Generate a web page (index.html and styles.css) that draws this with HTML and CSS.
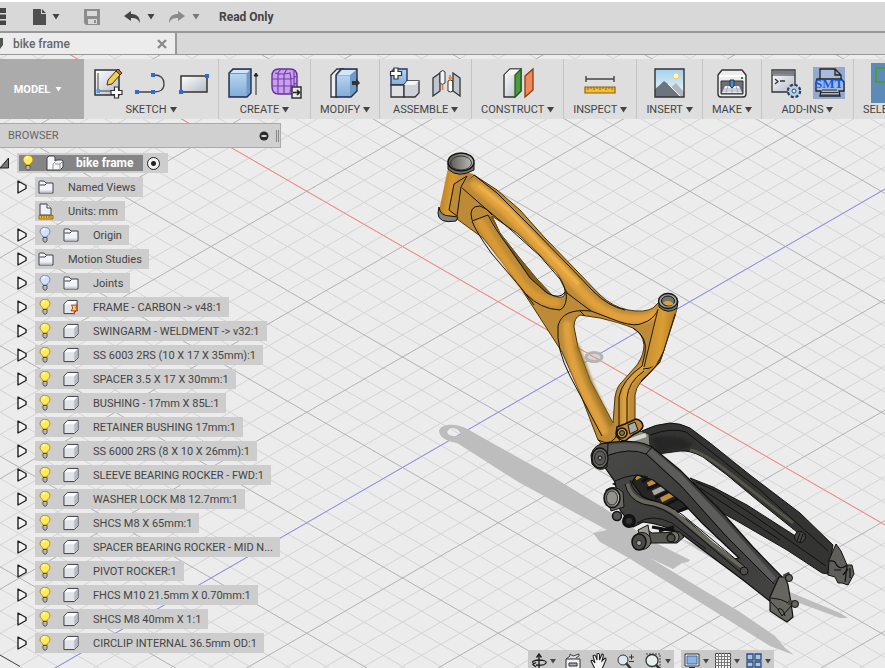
FILE: index.html
```html
<!DOCTYPE html>
<html lang="en">
<head>
    <meta charset="UTF-8">
    <meta name="viewport" content="width=device-width, initial-scale=1.0">
    <title>bike frame</title>
    <link rel="stylesheet" href="styles.css">
</head>
<body>
    <!-- shared icons -->
    <svg class="defs" width="0" height="0" aria-hidden="true">
        <defs>
            <linearGradient id="metal" x1="0" y1="0" x2="1" y2="1">
                <stop offset="0" stop-color="#fff"/><stop offset="1" stop-color="#b4b9c6"/>
            </linearGradient>
            <linearGradient id="blue" x1="0" y1="0" x2="0" y2="1">
                <stop offset="0" stop-color="#b8d4f0"/><stop offset="1" stop-color="#84add9"/>
            </linearGradient>
            <linearGradient id="sky" x1="0" y1="0" x2="0" y2="1">
                <stop offset="0" stop-color="#a5d0ee"/><stop offset="1" stop-color="#f3f9fb"/>
            </linearGradient>
            <symbol id="i-arrow" viewBox="0 0 10 14">
                <path d="M1 1V13L9 8.500V5.500Z" fill="#f4f4f4" stroke="#222" stroke-width="1.400" stroke-linejoin="round"/>
            </symbol>
            <symbol id="i-bulb" viewBox="0 0 12 16">
                <path d="M4 10C4 8 1 7.500 1 4.800A4.600 4.300 0 0 1 11 4.800C11 7.500 8 8 8 10Z" fill="#ffed5c" stroke="#b98a1d"/>
                <path d="M4 3.500Q4.500 2 6 2" fill="none" stroke="#fff" stroke-width="1.500"/>
                <path d="M4 10.500H8V13.500L7 15H5L4 13.500Z" fill="#bbb" stroke="#555"/>
            </symbol>
            <symbol id="i-bulb-off" viewBox="0 0 12 16">
                <path d="M4 10C4 8 1 7.500 1 4.800A4.600 4.300 0 0 1 11 4.800C11 7.500 8 8 8 10Z" fill="#d3e2fb" stroke="#7586b5"/>
                <path d="M4 3.500Q4.500 2 6 2" fill="none" stroke="#fff" stroke-width="1.500"/>
                <path d="M4 10.500H8V13.500L7 15H5L4 13.500Z" fill="#bbb" stroke="#555"/>
            </symbol>
            <symbol id="i-folder" viewBox="0 0 16 14">
                <path d="M1 13V2Q1 1 2 1H6L8 3H15V13Z" fill="#f2f3f6" stroke="#3c404a"/>
                <path d="M1.500 5H7L8.500 3.500" fill="none" stroke="#3c404a"/>
                <path d="M2 11.500H14" stroke="#d0d2da" stroke-width="2"/>
            </symbol>
            <symbol id="i-units" viewBox="0 0 16 17">
                <path d="M2 12V1H9L13 5V12Z" fill="#f0f1f4" stroke="#3c404a"/>
                <path d="M9 1V5H13" fill="#fff" stroke="#3c404a"/>
                <path d="M1 12.500H15V16H1Z" fill="#f7bd31" stroke="#a06a12"/>
                <path d="M3.500 13V15M6 13V15M8.500 13V15M11 13V15M13 13V15" stroke="#a06a12"/>
            </symbol>
            <symbol id="i-cube" viewBox="0 0 17 16">
                <path d="M1 15V5L5 1H16V11L12 15Z" fill="#e2e3e8" stroke="#33363f"/>
                <path d="M1.700 5L5.200 1.500H15.500L12 5Z" fill="#fff"/>
                <path d="M12 5.200L15.500 1.700V10.800L12 14.300Z" fill="#b9bcc8"/>
            </symbol>
            <symbol id="i-pinned" viewBox="0 0 17 17">
                <path d="M1 15V5L5 1H15V11L11 15Z" fill="#e6e7eb" stroke="#33363f"/>
                <path d="M1.700 5L5.200 1.500H14.500L11 5Z" fill="#fff"/>
                <path d="M9 6H15L13.500 9L15.500 12H8.500L10.500 9Z" fill="#ffd36b" stroke="#a5380e"/>
                <path d="M12 12V16" stroke="#a5380e"/>
            </symbol>
            <symbol id="i-assembly" viewBox="0 0 18 16">
                <path d="M1 15V3L3 1H8L9 2V6L11 5H16L17 6V12L14 15Z" fill="#f6f6f8" stroke="#3f424a"/>
                <path d="M7 9V15M9 7L7 9M14 9V15M9 9H14L17 6" fill="none" stroke="#8b8f9a"/>
            </symbol>
            <symbol id="i-down" viewBox="0 0 7 6"><path d="M0 0H7L3.500 5.500Z" fill="currentColor"/></symbol>
        </defs>
    </svg>

    <header class="top-bar">
        <button class="icon-btn grid-btn" aria-label="Data panel"><svg width="6" height="18" viewBox="0 0 6 18"><path d="M0 0H6V5H0ZM0 6.500H6V11H0ZM0 12.500H6V17H0Z" fill="#444"/></svg></button>
        <button class="icon-btn file-btn" aria-label="File">
            <svg width="13" height="16" viewBox="0 0 13 16"><path d="M0 0H8V5H13V16H0Z M9 0L13 4H9Z" fill="#4f4f4f"/></svg>
            <svg class="caret" width="8" height="6"><use href="#i-down"/></svg>
        </button>
        <button class="icon-btn save-btn" aria-label="Save"><svg width="16" height="16" viewBox="0 0 16 16"><path d="M0 0H16V16H2L0 14Z" fill="#8d8d8d"/><path d="M3 2H13V7H3ZM4 10H13V15H4Z" fill="#d8d8d8"/><path d="M10 11H12V14H10Z" fill="#8d8d8d"/></svg></button>
        <button class="icon-btn undo-btn" aria-label="Undo">
            <svg width="17" height="12" viewBox="0 0 17 12"><path d="M0 5L7 0V3C12 3 16 5 16 12C14 8 12 7 7 7V10Z" fill="#444"/></svg>
            <svg class="caret" width="8" height="6"><use href="#i-down"/></svg>
        </button>
        <button class="icon-btn redo-btn" aria-label="Redo" disabled>
            <svg width="17" height="12" viewBox="0 0 17 12"><path d="M16 5L9 0V3C4 3 0 5 0 12C2 8 4 7 9 7V10Z" fill="#8a8a8a"/></svg>
            <svg class="caret" width="8" height="6"><use href="#i-down"/></svg>
        </button>
        <span class="read-only">Read Only</span>
    </header>

    <nav class="tabs">
        <div class="tab">
            <svg width="4" height="13" viewBox="0 0 4 13"><path d="M0 1H3V8L0 12Z" fill="#555"/></svg>
            <a href="#" class="tab-name">bike frame</a>
            <button class="icon-btn" aria-label="Close tab"><svg width="10" height="10" viewBox="0 0 10 10"><path d="M1 1L9 9M9 1L1 9" stroke="#8a8a8a" stroke-width="2.400"/></svg></button>
        </div>
    </nav>

    <main class="viewport">
        <svg class="canvas" width="100%" height="100%" aria-hidden="true">
            <defs>
                <linearGradient id="headTube" x1="0" y1="0" x2="1" y2="0.200">
                    <stop offset="0" stop-color="#a87420"/><stop offset="0.400" stop-color="#d79a33"/><stop offset="1" stop-color="#b07f2c"/>
                </linearGradient>
                <linearGradient id="seatTube" x1="0" y1="0" x2="1" y2="0.200">
                    <stop offset="0" stop-color="#b98930"/><stop offset="0.600" stop-color="#dc9d35"/><stop offset="1" stop-color="#ab7a26"/>
                </linearGradient>
                <linearGradient id="pipe" x1="0" y1="0" x2="1" y2="0">
                    <stop offset="0" stop-color="#5e5d58"/><stop offset="1" stop-color="#b9b8b2"/>
                </linearGradient>
                <linearGradient id="arm" x1="0" y1="0" x2="1" y2="1">
                    <stop offset="0" stop-color="#4a4a49"/><stop offset="0.500" stop-color="#3a3a39"/><stop offset="1" stop-color="#444442"/>
                </linearGradient>
                <filter id="soft" x="-10%" y="-10%" width="120%" height="120%"><feGaussianBlur stdDeviation="1.500"/></filter>
            </defs>
            <g transform="translate(0 -55)">
                <path id="minor" stroke="#d4d4d4" fill="none"/>
                <path id="major" stroke="#b2b2b2" fill="none"/>
                <path d="M0 14.200L594 357L3594 2088" stroke="#f88" fill="none"/>
                <path d="M0 699.800L594 357L1794 -335.500" stroke="#9090f4" fill="none"/>
                <path d="M0 655L20 666.500" stroke="#444"/>

                <!-- floor shadow -->
                <g fill="#bdbdbd">
                    <path fill-rule="evenodd" d="M439 431C440 424 456 422 469 430L553 477L607 510L650 540L690 560L688 562L682 563L673 569L650 558L740 612L775 636L785 648L794 655L770 646L714 611L627 557L600 542L593 533L607 530L520 483L457 443Q440 440 439 431ZM447 432Q449 438 461 435Q459 427 450 428Z"/>
                    <path d="M680 538L720 556L790 592L840 613L848 618L840 618L780 596L735 573Z"/>
                </g>

                <ellipse cx="594" cy="357" rx="8" ry="4.500" fill="#d6d6d6" stroke="#b4b4b4" stroke-width="3"/>
                <path d="M590 355L598 359" stroke="#e77"/>

                <!-- far side of the swingarm -->
                <path fill-rule="evenodd" fill="#343433" stroke="#111" d="M642 431Q655 424 670 423Q680 423 690 428L710 443L750 475L800 513L833 545L828 574L822 573L787 550L737 521L715 509L690 478L713 487L747 505L797 537L797 532L757 500L727 475L703 457Q690 450 680 451L650 455Z"/>
                <path d="M650 435Q672 427 686 432L718 457L760 490L828 551" fill="none" stroke="#111"/>
                <path d="M690 450Q703 452 732 475L793 523" fill="none" stroke="#56544b" stroke-width="3"/>
                <path d="M696 482L716 491L750 513L790 541L826 566M700 488L740 514L780 540" fill="none" stroke="#111"/>
                <path d="M650 438Q676 432 693 444L685 450Q668 449 658 455Z" fill="#252525" filter="url(#soft)"/>
                <circle cx="800" cy="537" r="5.500" fill="#444" stroke="#111"/>
                <path d="M800 533L797 541M803 534L800 542" stroke="#111"/>
                <path d="M836 544L841 551L847 565L852 565L854 574L848 585L842 583L838 583L835 577L828 575L829 560Z" fill="#5f5e5a" stroke="#111"/>
                <path d="M829 561Q835 560 836 564Q840 571 847 565M834 570H841M843 575L848 569M847 566L845 582M850 568V578" fill="none" stroke="#111" stroke-width="1.200"/>

                <!-- frame -->
                <path fill-rule="evenodd" fill="#bd8b37" stroke="#4a3209" d="M474 175L497 190L520 210L545 238L577 271L600 295Q613 307 628 310Q645 313 653 308L658 303L677 308L675 316L664 350L660 362L640 383Q636 388 635 395V424L620 440L612 446H604L598 440L580 393L562 352L535 310L520 287L503 263L483 238L457 219L450 216L461 187Z
                    M492 216L517 233L540 255L557 273Q568 289 564 296Q560 299 552 295L537 279L518 256L500 233Z
                    M600 318L580 315Q574 318 574 327L578 347L590 380L613 423L615 397Q617 386 622 382L637 365Q644 355 644 345Q643 334 633 328Q621 323 600 318Z"/>
                <g fill="none" stroke-linecap="round" filter="url(#soft)">
                    <path d="M475 185L504 210L530 237L560 269L584 294Q602 313 622 318Q645 322 655 314" stroke="#e1a03a" stroke-width="9"/>
                    <path d="M480 186L508 209L540 243L578 283" stroke="#f2b64b" stroke-width="4"/>
                    <path d="M480 222L500 253L524 286Q540 302 556 303" stroke="#d99a35" stroke-width="8"/>
                    <path d="M567 325Q567 355 585 393L604 431" stroke="#e0a03c" stroke-width="8"/>
                    <path d="M655 355L637 374Q626 383 625 396V425" stroke="#dda03d" stroke-width="7"/>
                </g>
                <path d="M490 217L492 216L500 233L518 256L537 279L552 295L545 292L529 277L511 252Z" fill="#7d5b1d"/>
                <path d="M577 345L592 385L612 426" stroke="#96701f" stroke-width="3" fill="none" filter="url(#soft)"/>
                <g fill="none" stroke="#17120a">
                    <path d="M474 175L497 193L530 226L569 266L594 292Q608 306 625 310"/>
                    <path d="M461 187L485 208L510 229L540 256L560 279L567 293L591 311"/>
                    <path d="M457 219L450 212M454 184L466 176"/>
                    <path d="M472 220Q468 206 480 206Q487 208 492 215"/>
                    <path d="M472 221L488 215M472 221Q476 232 492 254L522 289L534 305"/>
                    <path d="M488 215Q494 228 513 253L530 278L547 293Q560 300 565 292"/>
                    <path d="M526 294Q540 309 560 310Q568 306 566 291"/>
                    <path d="M591 311Q562 308 558 326Q556 349 570 376L602 436"/>
                    <path d="M591 311L620 322Q636 327 643 323Q653 320 658 310"/>
                    <path d="M580 311L585 316M633 328Q648 337 645 353L642 366"/>
                    <path d="M643 369Q656 370 664 350"/>
                    <path d="M642 366Q622 380 619 397V430M644 371Q628 382 627 398V427M660 362L641 382"/>
                    <path d="M598 440Q613 448 618 432"/>
                </g>

                <!-- head tube and seat clamp -->
                <path d="M448 168L439 211Q443 220 457 219L461 190L474 174Z" fill="url(#headTube)"/>
                <path d="M454 184L467 176L461 187L457 216L449 210Z" fill="#bd8b37" stroke="#17120a"/>
                <path d="M439 207Q440 216 450 216L458 217L456 221Q438 224 438 213Z" fill="#858580" stroke="#111"/>
                <path d="M448 163V169Q458 179 474 170V163Z" fill="#74746f" stroke="#111"/>
                <ellipse cx="461" cy="162" rx="13" ry="9" fill="url(#pipe)" stroke="#151515" stroke-width="1.500"/>
                <ellipse cx="461" cy="163" rx="10.500" ry="7" fill="url(#pipe)" stroke="#222" stroke-width="0.800"/>
                <path d="M658 306L644 368L655 366L664 350L677 308Z" fill="url(#seatTube)"/>
                <path d="M658 309L644 367M675 314L664 350Q661 364 641 381" fill="none" stroke="#2b1d06"/>
                <path d="M659 301V307Q668 315 677 308L678 301Z" fill="#777771" stroke="#111"/>
                <ellipse cx="668" cy="301" rx="9.500" ry="7.500" fill="#a0a09a" stroke="#151515" stroke-width="1.300"/>
                <ellipse cx="668" cy="301" rx="6.500" ry="5" fill="#77746c" stroke="#111"/>
                <path d="M663 303Q668 298 674 304Q668 308 663 303Z" fill="#dea037"/>

                <!-- shock linkage -->
                <path d="M612 484L630 472L660 482L692 508L681 512L650 505Z" fill="#252524"/>
                <g stroke="#c18c3a" stroke-width="5">
                    <path d="M635 478L642 474"/><path d="M648 485L657 480"/><path d="M661 500L673 494"/>
                </g>
                <path d="M653 493L666 487" stroke="#aaa9a0" stroke-width="5"/>
                <path d="M642 482L650 476M647 489L661 483M655 498L671 490M664 506L681 497M675 513L688 507" stroke="#111" stroke-width="3"/>
                <path d="M625 440L640 431L649 434L650 446L620 444Z" fill="#85847c" stroke="#222"/>
                <path d="M628 441L646 435" stroke="#d7d7d2" stroke-width="4"/>
                <path d="M617 427L625 424L636 419Q642 420 643 426Q642 431 634 434L625 441Q617 440 616 434Z" fill="#c48a2d" stroke="#111" stroke-width="1.500"/>
                <circle cx="622" cy="433" r="5" fill="#cf9435" stroke="#111" stroke-width="1.500"/>
                <circle cx="622" cy="433" r="2.500" fill="#77776f" stroke="#111"/>
                <path d="M628 425L635 422L638 430L630 434Z" fill="#aaa9a3" stroke="#111"/>

                <!-- near side of the swingarm -->
                <path fill-rule="evenodd" fill="url(#arm)" stroke="#0d0d0d" stroke-width="1.200" d="M600 444Q620 440 637 442Q645 443 652 447L680 470L720 510L753 547L782 577L771 602L743 580L703 550L683 535Q663 524 643 522L633 527L620 510L615 482L604 466Z
                    M632 482L637 475L653 480L683 503L703 524L739 558L734 559L713 543L687 520L663 505L643 497Z"/>
                <path d="M652 449L680 473L724 519L776 578L772 583L724 533L680 484L646 452Z" fill="#5c5c5b"/>
                <path d="M605 446Q634 440 650 449L646 454Q626 448 608 455Z" fill="#5a5a58"/>
                <path d="M606 456Q630 447 646 454L682 487L725 535L774 584M652 447L646 454" fill="none" stroke="#0d0d0d"/>
                <path d="M615 481Q634 472 648 477" fill="none" stroke="#111"/>
                <path d="M627 484Q630 498 645 502Q666 504 681 518L712 544L745 569" fill="none" stroke="#68665d" stroke-width="4"/>
                <path d="M625 484Q628 499 643 504Q665 507 681 522L712 548L740 572M630 480Q633 494 648 499Q668 503 684 516L714 541L745 567" fill="none" stroke="#0d0d0d"/>
                <path d="M637 523Q652 513 672 523L706 549" fill="none" stroke="#111"/>
                <circle cx="744" cy="571" r="4" fill="#4f4e49" stroke="#111"/>

                <!-- pivots -->
                <path d="M591 455Q594 443 608 443L607 467Q599 473 592 464Z" fill="#565652" stroke="#111"/>
                <ellipse cx="600" cy="458" rx="8" ry="10" fill="#66655f" stroke="#111" stroke-width="1.300"/>
                <ellipse cx="600" cy="458" rx="5.500" ry="7" fill="#5a5954" stroke="#222"/>
                <circle cx="600" cy="458" r="2" fill="#999" stroke="#111"/>
                <path d="M606 490Q614 484 623 492L624 507L611 511Z" fill="#696862" stroke="#111"/>
                <ellipse cx="612" cy="498" rx="8" ry="9.500" fill="url(#pipe)" stroke="#111" stroke-width="1.500"/>
                <ellipse cx="612" cy="498" rx="5.500" ry="7" fill="#94938c" stroke="#333"/>
                <circle cx="617" cy="516" r="4.500" fill="#555" stroke="#111" stroke-width="1.500"/>
                <circle cx="629" cy="521" r="6" fill="#181818" stroke="#111" stroke-width="2"/>
                <circle cx="629" cy="521" r="3" fill="#333"/>
                <path d="M645 528L652 533L680 532L684 537L677 543H650Z" fill="#565651" stroke="#111"/>
                <path d="M652 527L675 531M659 531L674 527" stroke="#111" stroke-width="3"/>
                <path d="M638 530L648 525L651 543L644 548Z" fill="#9c9b94" stroke="#111"/>
                <ellipse cx="642" cy="541" rx="9" ry="8.500" fill="#696862" stroke="#111"/>
                <ellipse cx="639" cy="542" rx="7" ry="8" fill="#4b4a46" stroke="#111" stroke-width="1.500"/>
                <circle cx="639" cy="543" r="2.500" fill="#aaa99f" stroke="#222"/>
                <ellipse cx="674" cy="537" rx="5" ry="5.500" fill="#77766e" stroke="#111"/>
                <circle cx="671" cy="538" r="4" fill="#4e4d48" stroke="#111" stroke-width="1.300"/>

                <!-- dropout -->
                <path d="M779 577L785 577L788 585L791 603L793 617L787 622L779 617L770 611L770 597Z" fill="#66655f" stroke="#111" stroke-width="1.200"/>
                <path d="M771 598Q780 598 791 604M771 602Q778 608 782 616M778 609Q783 607 785 616M782 616L793 604" fill="none" stroke="#111"/>
                <path d="M784 577L790 574M788 602L797 604" stroke="#44433f" stroke-width="5"/>
                <circle cx="789" cy="578" r="3.500" fill="#66655f" stroke="#111"/>
                <circle cx="795" cy="604" r="3.500" fill="#66655f" stroke="#111"/>
            </g>
        </svg>

        <div class="ribbon">
            <button class="workspace">MODEL <svg class="caret" width="7" height="5"><use href="#i-down"/></svg></button>
            <div class="group">
                <div class="tools">
                    <button class="tool" aria-label="Create sketch"><svg width="32" height="32" viewBox="0 0 32 32"><path d="M3 3H27V28H3Z" fill="url(#metal)" stroke="#333" stroke-width="1.500"/><path d="M6 6V24H23" fill="none" stroke="#444"/><path d="M4.500 22H8V26H4.500Z" fill="#4b9df5"/><path d="M15 18L16 13L24 4L28 8L20 17Z" fill="#f7cf4b" stroke="#333"/><path d="M24 4L26 2L30 6L28 8Z" fill="#b96f42" stroke="#333"/><path d="M22.500 20H26.500V23.500H30V27.500H26.500V31H22.500V27.500H19V23.500H22.500Z" fill="#fff" stroke="#333" stroke-width="1.200"/></svg></button>
                    <button class="tool" aria-label="Arc"><svg width="32" height="32" viewBox="0 0 32 32"><path d="M3 25H19Q29 25 29 17Q29 8 19 8" fill="none" stroke="#444" stroke-width="1.300"/><path d="M0 23H4V27H0ZM16 23H20V27H16ZM16 6H20V10H16Z" fill="#2f6bd8"/></svg></button>
                    <button class="tool" aria-label="Rectangle"><svg width="32" height="32" viewBox="0 0 32 32"><path d="M3 9H29V25H3Z" fill="url(#metal)" stroke="#333" stroke-width="1.500"/><path d="M1 23H5V27H1ZM27 7H31V11H27Z" fill="#2f6bd8"/></svg></button>
                </div>
                <button class="menu">SKETCH <svg class="caret" width="7" height="6"><use href="#i-down"/></svg></button>
            </div>
            <div class="group">
                <div class="tools">
                    <button class="tool" aria-label="Extrude"><svg width="32" height="32" viewBox="0 0 32 32"><path d="M2 6L6 2H24V26L20 30H2Z" fill="#6f9ac8" stroke="#222f4f" stroke-width="1.400"/><path d="M3 7H19.500V29H3Z" fill="url(#blue)"/><path d="M3.500 6L6.500 3H23L20 6Z" fill="#d3e6f7"/><path d="M29 28V8M27 9H31L29 6Z" fill="#222" stroke="#222"/></svg></button>
                    <button class="tool" aria-label="Create form"><svg width="32" height="32" viewBox="0 0 32 32"><path d="M2 9Q2 2 9 2H20Q27 2 27 9V20Q27 27 20 27H9Q2 27 2 20Z" fill="#c9a0f0" stroke="#63309b" stroke-width="1.400"/><path d="M5 6Q12 8 20 6Q22 15 20 26M2 12H21L27 9M2 19H21L27 16M8 7V27M14 7V27M11 2L7 7M17 2L14 7M24 4V23" fill="none" stroke="#7440a6" stroke-width="1.200"/><path d="M22 20H31V31H22Z" fill="#e8e8e8" stroke="#333" stroke-width="1.500"/><path d="M23 25.500H29M27 23L29.500 25.500L27 28" fill="none" stroke="#222" stroke-width="1.700"/></svg></button>
                </div>
                <button class="menu">CREATE <svg class="caret" width="7" height="6"><use href="#i-down"/></svg></button>
            </div>
            <div class="group">
                <div class="tools">
                    <button class="tool" aria-label="Press pull"><svg width="32" height="32" viewBox="0 0 32 32"><path d="M2 8L8 2H14L8 8V30H2Z" fill="#eceef2" stroke="#333" stroke-width="1.300"/><path d="M7 8L12 2H28V24L22 30H7Z" fill="#6f9ac8" stroke="#222f4f" stroke-width="1.400"/><path d="M8 8.500H21V29H8Z" fill="url(#blue)"/><path d="M8.500 8L13 3H27L21 8Z" fill="#d3e6f7"/><path d="M23 14H27V11L31 16L27 20V18H23Z" fill="#333"/></svg></button>
                </div>
                <button class="menu">MODIFY <svg class="caret" width="7" height="6"><use href="#i-down"/></svg></button>
            </div>
            <div class="group">
                <div class="tools">
                    <button class="tool" aria-label="New component"><svg width="32" height="32" viewBox="0 0 32 32"><path d="M3 18V5L6 2H19V15L16 18Z" fill="url(#blue)" stroke="#22396b" stroke-width="1.400"/><path d="M3 18H16V30H3Z" fill="#dfe0e6" stroke="#333" stroke-width="1.300"/><path d="M16 18L19 14H31V26L27 30H16Z" fill="#cfd1da" stroke="#333" stroke-width="1.300"/><path d="M16 18H27L31 14H19Z" fill="#f5f5f7"/><path d="M6 1H10V4.500H13.500V8.500H10V12H6V8.500H2.500V4.500H6Z" fill="#fff" stroke="#333" stroke-width="1.200"/></svg></button>
                    <button class="tool" aria-label="Joint"><svg width="32" height="32" viewBox="0 0 32 32"><path d="M2 11L9 6V24L2 29Z" fill="#bfc6d0" stroke="#333" stroke-width="1.300"/><path d="M9 5Q12 2 14 5V16Q11 19 9 16Z" fill="#f4f4f4" stroke="#333"/><path d="M17 14Q19 12 22 14V24Q19 26 17 24Z" fill="#fff" stroke="#333"/><path d="M22 6L29 11V29L22 24Z" fill="#bfc6d0" stroke="#333" stroke-width="1.300"/><path d="M11.500 18V23M19 8V14M17.500 11H21" stroke="#f47a1f" stroke-width="1.600"/></svg></button>
                </div>
                <button class="menu">ASSEMBLE <svg class="caret" width="7" height="6"><use href="#i-down"/></svg></button>
            </div>
            <div class="group">
                <div class="tools">
                    <button class="tool" aria-label="Offset plane"><svg width="32" height="32" viewBox="0 0 32 32"><path d="M2 8L8 2H19V24L13 30H2Z" fill="url(#metal)" stroke="#333" stroke-width="1.400"/><path d="M2.500 8L8 2.500H18.500L13 8Z" fill="#f6f6f8"/><path d="M13 8L19 2V24L13 30Z" fill="#4c9a3f" stroke="#245c22" stroke-width="1.300"/><path d="M23 9L31 2V23L23 30Z" fill="#ee8b57" stroke="#8b3a16" stroke-width="1.300"/></svg></button>
                </div>
                <button class="menu">CONSTRUCT <svg class="caret" width="7" height="6"><use href="#i-down"/></svg></button>
            </div>
            <div class="group">
                <div class="tools">
                    <button class="tool" aria-label="Measure"><svg width="32" height="32" viewBox="0 0 32 32"><path d="M2 9V15M30 9V15M2 12H30" stroke="#444" stroke-width="1.400"/><path d="M1 20H31V26H1Z" fill="#f3bb36" stroke="#8a6412" stroke-width="1.200"/><path d="M4 20V23M7 20V22M10 20V23M13 20V22M16 20V23M19 20V22M22 20V23M25 20V22M28 20V23" stroke="#8a6412"/></svg></button>
                </div>
                <button class="menu">INSPECT <svg class="caret" width="7" height="6"><use href="#i-down"/></svg></button>
            </div>
            <div class="group">
                <div class="tools">
                    <button class="tool" aria-label="Decal"><svg width="32" height="32" viewBox="0 0 32 32"><path d="M1 2H30V30H1Z" fill="url(#sky)"/><circle cx="22" cy="9" r="3" fill="#fff6c5" stroke="#f2cf6a"/><path d="M15 22L22 16L30 25V30H15Z" fill="#aeb9bf"/><path d="M1 22Q6 18 10 14L14 17L27 30H1Z" fill="#6b757f"/><path d="M14 17L27 30" stroke="#fff"/><path d="M1 2H30V30H1Z" fill="none" stroke="#333" stroke-width="1.400"/></svg></button>
                </div>
                <button class="menu">INSERT <svg class="caret" width="7" height="6"><use href="#i-down"/></svg></button>
            </div>
            <div class="group">
                <div class="tools">
                    <button class="tool" aria-label="3D print"><svg width="32" height="32" viewBox="0 0 32 32"><path d="M2 8L6 3H26L30 8V27Q30 30 27 30H5Q2 30 2 27Z" fill="#ececee" stroke="#333" stroke-width="1.400"/><path d="M3 9H29" stroke="#fff" stroke-width="2"/><path d="M5 14H27V27H5Z" fill="#6b6f79" stroke="#333"/><path d="M9 19H23L26 26H6Z" fill="#eef0f4"/><path d="M8 22H24M7 24H25M12 19L10 26M16 19V26M20 19L22 26" stroke="#9a9ea8" stroke-width="0.800"/><path d="M14 13H18V19L16 21L14 19Z" fill="#4d8ad0" stroke="#234"/><path d="M25 10H27V12H25Z" fill="#178a1c"/></svg></button>
                </div>
                <button class="menu">MAKE <svg class="caret" width="7" height="6"><use href="#i-down"/></svg></button>
            </div>
            <div class="group">
                <div class="tools">
                    <button class="tool" aria-label="Scripts"><svg width="32" height="32" viewBox="0 0 32 32"><path d="M2 3H25V25H2Z" fill="url(#metal)" stroke="#333" stroke-width="1.300"/><path d="M3 4H24V7H3Z" fill="#777c86"/><path d="M2 8H25" stroke="#333"/><path d="M5 12L8 14.500L5 17M10 14H15" fill="none" stroke="#333" stroke-width="1.300"/><circle cx="24" cy="24" r="6" fill="#aac4e2" stroke="#28405f" stroke-width="2.500" stroke-dasharray="3 1.700"/><circle cx="24" cy="24" r="5" fill="#b8d0ea"/><circle cx="24" cy="24" r="2" fill="#fff" stroke="#28405f"/></svg></button>
                    <button class="tool" aria-label="SMT"><svg width="32" height="32" viewBox="0 0 32 32"><path d="M0 0H32V32H0Z" fill="#94a9cf"/><path d="M7 12V2H22L28 8V12M22 2V8H28" fill="#a9bbdc" stroke="#222" stroke-width="1.300"/><path d="M4 12H28L31 15V24H26L27 29H7L8 24H3V15Z" fill="#a5b9dc" stroke="#222" stroke-width="1.300"/><path d="M9 23H24M8 25.500H25M8 28H26" stroke="#333"/><text x="2" y="21" class="smt">SMT</text></svg></button>
                </div>
                <button class="menu">ADD-INS <svg class="caret" width="7" height="6"><use href="#i-down"/></svg></button>
            </div>
            <div class="group">
                <div class="tools">
                    <button class="tool select-tool" aria-label="Select"><svg width="32" height="40" viewBox="0 0 32 40"><path d="M0 0H32V40H0Z" fill="#5c8bb8"/><path d="M5 5H27V19H5Z" fill="none" stroke="#4f9d1b" stroke-width="1.500"/></svg></button>
                </div>
                <button class="menu">SELECT <svg class="caret" width="7" height="6"><use href="#i-down"/></svg></button>
            </div>
        </div>

        <section class="browser">
            <div class="browser-head">
                <span>BROWSER</span>
                <button class="icon-btn" aria-label="Collapse"><svg width="10" height="10" viewBox="0 0 10 10"><circle cx="5" cy="5" r="4.500" fill="#2b2b2b"/><path d="M2.500 5H7.500" stroke="#fff" stroke-width="1.600"/></svg></button>
                <i class="grip"></i>
            </div>
            <ul class="tree">
                <li class="root">
                    <svg width="9" height="12" viewBox="0 0 9 12"><path d="M0 11L8.500 1V11Z" fill="#777" stroke="#222"/></svg>
                    <div class="root-item">
                        <label class="root-name" for="active"><svg width="12" height="16"><use href="#i-bulb"/></svg><svg width="18" height="16"><use href="#i-assembly"/></svg><b>bike frame</b></label>
                        <input type="radio" id="active" name="active" checked>
                    </div>
                </li>
                <li><svg class="arrow"><use href="#i-arrow"/></svg><a href="#" class="item"><svg width="16" height="14"><use href="#i-folder"/></svg><span>Named Views</span></a></li>
                <li><i class="arrow"></i><a href="#" class="item"><svg width="16" height="17"><use href="#i-units"/></svg><span>Units: mm</span></a></li>
                <li><svg class="arrow"><use href="#i-arrow"/></svg><a href="#" class="item"><svg class="bulb"><use href="#i-bulb-off"/></svg><svg width="16" height="14"><use href="#i-folder"/></svg><span>Origin</span></a></li>
                <li><svg class="arrow"><use href="#i-arrow"/></svg><a href="#" class="item"><svg width="16" height="14"><use href="#i-folder"/></svg><span>Motion Studies</span></a></li>
                <li><svg class="arrow"><use href="#i-arrow"/></svg><a href="#" class="item"><svg class="bulb"><use href="#i-bulb-off"/></svg><svg width="16" height="14"><use href="#i-folder"/></svg><span>Joints</span></a></li>
                <li><svg class="arrow"><use href="#i-arrow"/></svg><a href="#" class="item"><svg class="bulb"><use href="#i-bulb"/></svg><svg width="16" height="17"><use href="#i-pinned"/></svg><span>FRAME - CARBON -&gt; v48:1</span></a></li>
                <li><svg class="arrow"><use href="#i-arrow"/></svg><a href="#" class="item"><svg class="bulb"><use href="#i-bulb"/></svg><svg width="16" height="16"><use href="#i-cube"/></svg><span>SWINGARM - WELDMENT -&gt; v32:1</span></a></li>
                <li><svg class="arrow"><use href="#i-arrow"/></svg><a href="#" class="item"><svg class="bulb"><use href="#i-bulb"/></svg><svg width="16" height="16"><use href="#i-cube"/></svg><span>SS 6003 2RS (10 X 17 X 35mm):1</span></a></li>
                <li><svg class="arrow"><use href="#i-arrow"/></svg><a href="#" class="item"><svg class="bulb"><use href="#i-bulb"/></svg><svg width="16" height="16"><use href="#i-cube"/></svg><span>SPACER 3.5 X 17 X 30mm:1</span></a></li>
                <li><svg class="arrow"><use href="#i-arrow"/></svg><a href="#" class="item"><svg class="bulb"><use href="#i-bulb"/></svg><svg width="16" height="16"><use href="#i-cube"/></svg><span>BUSHING - 17mm X 85L:1</span></a></li>
                <li><svg class="arrow"><use href="#i-arrow"/></svg><a href="#" class="item"><svg class="bulb"><use href="#i-bulb"/></svg><svg width="16" height="16"><use href="#i-cube"/></svg><span>RETAINER BUSHING 17mm:1</span></a></li>
                <li><svg class="arrow"><use href="#i-arrow"/></svg><a href="#" class="item"><svg class="bulb"><use href="#i-bulb"/></svg><svg width="16" height="16"><use href="#i-cube"/></svg><span>SS 6000 2RS (8 X 10 X 26mm):1</span></a></li>
                <li><svg class="arrow"><use href="#i-arrow"/></svg><a href="#" class="item"><svg class="bulb"><use href="#i-bulb"/></svg><svg width="16" height="16"><use href="#i-cube"/></svg><span>SLEEVE BEARING ROCKER - FWD:1</span></a></li>
                <li><svg class="arrow"><use href="#i-arrow"/></svg><a href="#" class="item"><svg class="bulb"><use href="#i-bulb"/></svg><svg width="16" height="16"><use href="#i-cube"/></svg><span>WASHER LOCK M8 12.7mm:1</span></a></li>
                <li><svg class="arrow"><use href="#i-arrow"/></svg><a href="#" class="item"><svg class="bulb"><use href="#i-bulb"/></svg><svg width="16" height="16"><use href="#i-cube"/></svg><span>SHCS M8 X 65mm:1</span></a></li>
                <li><svg class="arrow"><use href="#i-arrow"/></svg><a href="#" class="item"><svg class="bulb"><use href="#i-bulb"/></svg><svg width="16" height="16"><use href="#i-cube"/></svg><span>SPACER BEARING ROCKER - MID N...</span></a></li>
                <li><svg class="arrow"><use href="#i-arrow"/></svg><a href="#" class="item"><svg class="bulb"><use href="#i-bulb"/></svg><svg width="16" height="16"><use href="#i-cube"/></svg><span>PIVOT ROCKER:1</span></a></li>
                <li><svg class="arrow"><use href="#i-arrow"/></svg><a href="#" class="item"><svg class="bulb"><use href="#i-bulb"/></svg><svg width="16" height="16"><use href="#i-cube"/></svg><span>FHCS M10 21.5mm X 0.70mm:1</span></a></li>
                <li><svg class="arrow"><use href="#i-arrow"/></svg><a href="#" class="item"><svg class="bulb"><use href="#i-bulb"/></svg><svg width="16" height="16"><use href="#i-cube"/></svg><span>SHCS M8 40mm X 1:1</span></a></li>
                <li><svg class="arrow"><use href="#i-arrow"/></svg><a href="#" class="item"><svg class="bulb"><use href="#i-bulb"/></svg><svg width="16" height="16"><use href="#i-cube"/></svg><span>CIRCLIP INTERNAL 36.5mm OD:1</span></a></li>
            </ul>
        </section>

        <div class="nav-bar">
            <div class="nav-group">
                <button class="icon-btn" aria-label="Orbit"><svg width="16" height="16" viewBox="0 0 16 16"><path d="M8 16V2M5.500 4.500L8 1L10.500 4.500" fill="none" stroke="#222" stroke-width="1.400"/><path d="M3 11Q-1 8 7 7Q16 7 15 10Q13 13 5 12M5 9.500L2 11.500L5 14" fill="none" stroke="#222" stroke-width="1.300"/></svg><svg class="caret" width="6" height="5"><use href="#i-down"/></svg></button>
                <button class="icon-btn" aria-label="Look at"><svg width="16" height="16" viewBox="0 0 16 16"><path d="M1 6L5 3V1L8 3L14 1V3L11 5" fill="#ddd" stroke="#444"/><path d="M1 6H15V16H1Z" fill="#f1f1f3" stroke="#333"/><path d="M4 10H12V13H4Z" fill="#aab" stroke="#333"/></svg></button>
                <button class="icon-btn" aria-label="Pan"><svg width="18" height="16" viewBox="0 0 18 16"><path d="M5 16L1 8Q2 6 5 10L3 3Q5 1 6 4L7 7V1Q9 -0.500 9.500 2V7L12 1Q14 1 13 4L12 8L15 5Q17 5 15 9L12 16Z" fill="#f6f6f6" stroke="#222" stroke-width="1.100"/></svg></button>
                <button class="icon-btn" aria-label="Zoom"><svg width="18" height="16" viewBox="0 0 18 16"><circle cx="6" cy="7" r="5" fill="#dceaf0" stroke="#333"/><path d="M9 10L14 16" stroke="#333" stroke-width="2.500"/><path d="M12 4H17M14.500 1.500V6.500M12 8.500H17" stroke="#333"/></svg></button>
                <button class="icon-btn" aria-label="Fit"><svg width="18" height="16" viewBox="0 0 18 16"><path d="M2 1H16V16" fill="none" stroke="#444" stroke-dasharray="2 1"/><circle cx="8" cy="7.500" r="6" fill="#e3f0ee" stroke="#333" stroke-width="1.300"/><path d="M12 12L16 16" stroke="#333" stroke-width="2.500"/></svg><svg class="caret" width="6" height="5"><use href="#i-down"/></svg></button>
            </div>
            <div class="nav-group view-group">
                <button class="icon-btn" aria-label="Display"><svg width="16" height="16" viewBox="0 0 16 16"><path d="M1 1H15V13H1Z" fill="#f5f5f5" stroke="#333"/><path d="M3 3H13V11H3Z" fill="#8fb4e0" stroke="#3f69a8"/><path d="M5 15H11" stroke="#333" stroke-width="2"/></svg><svg class="caret" width="6" height="5"><use href="#i-down"/></svg></button>
                <button class="icon-btn" aria-label="Grid"><svg width="16" height="16" viewBox="0 0 16 16"><path d="M0.500 0.500H15.500V16H0.500Z" fill="#f5f5f5" stroke="#444"/><path d="M3.500 0V16M6.500 0V16M9.500 0V16M12.500 0V16M0 3.500H16M0 6.500H16M0 9.500H16M0 12.500H16" stroke="#777"/></svg><svg class="caret" width="6" height="5"><use href="#i-down"/></svg></button>
                <button class="icon-btn" aria-label="Viewports"><svg width="16" height="16" viewBox="0 0 16 16"><path d="M1 1H7V7H1ZM9 1H15V7H9ZM1 9H7V14H1ZM9 9H15V14H9Z" fill="#a9c4e4" stroke="#2b4a7c" stroke-width="1.300"/></svg><svg class="caret" width="6" height="5"><use href="#i-down"/></svg></button>
            </div>
        </div>
    </main>

    <script src="grid.js"></script>
</body>
</html>
```

FILE: grid.js
```js
// isometric floor grid around the origin of the model
const origin = { x: 594, y: 357 };
const slope = 110.5 / 191.5;
const step = 22.1;
const width = 4000;

let minor = "";
let major = "";

for (let k = -180; k <= 180; k++) {
    const left = origin.y + k * step;
    const down = `M0 ${left - origin.x * slope}L${width} ${left + (width - origin.x) * slope}`;
    const up = `M0 ${left + origin.x * slope}L${width} ${left - (width - origin.x) * slope}`;

    if (k % 5 === 0) {
        major += down + up;
    } else {
        minor += down + up;
    }
}

document.getElementById("minor").setAttribute("d", minor);
document.getElementById("major").setAttribute("d", major);
```

FILE: styles.css
```css
* {
    box-sizing: border-box;
}

body {
    margin: 0;
    height: 100vh;
    display: flex;
    flex-direction: column;
    overflow: hidden;
    background-color: #ececec;
    color: #444;
    font-family: Roboto, "Liberation Sans", sans-serif;
    font-size: 11px;
}

button {
    font: inherit;
    color: inherit;
    background: none;
    border: none;
    padding: 0;
    cursor: pointer;
}

a {
    color: inherit;
    text-decoration: none;
}

svg {
    display: block;
    flex: none;
}

.defs {
    position: absolute;
}

.icon-btn {
    display: flex;
    align-items: center;
    gap: 6px;
}

/* top bar */
.top-bar {
    display: flex;
    align-items: center;
    flex: none;
    height: 33px;
    background-color: #d8d8d8;
    border-top: 2px solid #fff;
    border-bottom: 2px solid #989898;
}

.file-btn {
    margin-left: 27px;
}

.save-btn {
    margin-left: 24px;
}

.undo-btn {
    margin-left: 24px;
}

.redo-btn {
    margin-left: 14px;
    color: #777;
}

.read-only {
    margin-left: 19px;
    font-weight: bold;
    font-size: 12px;
}

/* document tabs */
.tabs {
    display: flex;
    flex: none;
    height: 22px;
    background-color: #d8d8d8;
    border-bottom: 1px solid #989898;
}

.tab {
    display: flex;
    align-items: center;
    width: 177px;
    padding-right: 8px;
    background-color: #ececec;
    border-right: 2px solid #989898;
}

.tab-name {
    flex: 1;
    padding-left: 9px;
    font-size: 12px;
    font-weight: 500;
    color: #666;
}

/* model viewport */
.viewport {
    position: relative;
    flex: 1;
    min-height: 0;
    padding-top: 4px;
    overflow: hidden;
}

.canvas {
    position: absolute;
    top: 0;
    left: 0;
}

.ribbon {
    position: relative;
    display: flex;
    height: 60px;
    overflow: hidden;
    background-color: #dedede;
}

.workspace {
    display: flex;
    align-items: center;
    justify-content: center;
    gap: 5px;
    flex: none;
    width: 84px;
    padding-right: 8px;
    background-color: #ababab;
    color: #fff;
    font-weight: bold;
}

.group {
    display: flex;
    flex-direction: column;
    align-items: center;
    flex: none;
    padding: 8px 8px 0;
    border-right: 1px solid #c4c4c4;
}

.tools {
    display: flex;
    gap: 11px;
    height: 32px;
}

.select-tool {
    margin-top: -4px;
}

.menu {
    display: flex;
    align-items: center;
    gap: 3px;
    padding: 4px 1px 0;
}

.smt {
    font: bold 13px "Liberation Serif", serif;
    fill: #0a5cf0;
}

/* browser panel */
.browser {
    position: relative;
    width: 281px;
    padding-top: 4px;
}

.browser-head {
    display: flex;
    align-items: center;
    gap: 7px;
    height: 25px;
    padding: 0 1px 0 8px;
    background-color: #d0d0d0;
    border: 1px solid #aaa;
    border-left: none;
    color: #666;
}

.browser-head span {
    flex: 1;
}

.grip {
    width: 3px;
    height: 12px;
    border-left: 1px solid #888;
    border-right: 1px solid #888;
}

.tree {
    list-style: none;
    margin: 0;
    padding: 3px 0 0;
}

.tree li {
    display: flex;
    align-items: center;
    gap: 8px;
    height: 24px;
    padding-left: 17px;
    white-space: nowrap;
}

.tree .root {
    padding-left: 0;
}

.arrow {
    width: 10px;
    height: 14px;
}

.item {
    display: flex;
    align-items: center;
    height: 20px;
    padding: 0 7px 0 3px;
    background-color: #cdcdcd;
}

.item span {
    margin-left: 14px;
}

.bulb {
    width: 12px;
    height: 16px;
    margin: 0 12px 0 1px;
}

.root-item {
    display: flex;
    align-items: center;
    gap: 4px;
    height: 20px;
    padding: 0 8px 0 2px;
    background-color: #cdcdcd;
}

.root-name {
    display: flex;
    align-items: center;
    gap: 12px;
    height: 16px;
    padding: 0 10px 0 3px;
    background-color: #858585;
    color: #fff;
    font-size: 12px;
}

.root-item input {
    appearance: none;
    width: 13px;
    height: 13px;
    margin: 0;
    border: 1px solid #222;
    border-radius: 50%;
    background: radial-gradient(circle, #222 0 2px, #f4f4f4 3px);
}

/* navigation bar */
.nav-bar {
    position: absolute;
    left: 528px;
    bottom: 0;
    display: flex;
    gap: 7px;
}

.nav-group {
    display: flex;
    align-items: flex-start;
    gap: 9px;
    height: 18px;
    padding: 3px 3px 0;
    background-color: #c9c9c9;
    overflow: hidden;
}

.view-group {
    gap: 6px;
}

.nav-group .icon-btn {
    gap: 3px;
}
```
